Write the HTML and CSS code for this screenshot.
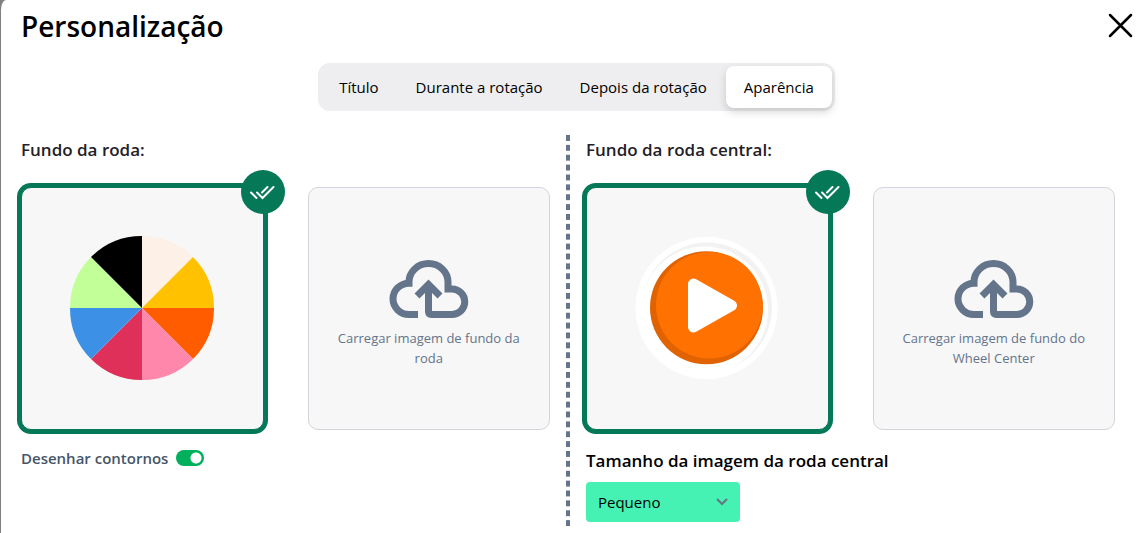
FILE: index.html
```html
<!DOCTYPE html>
<html lang="pt">
<head>
<meta charset="utf-8">
<meta name="viewport" content="width=device-width, initial-scale=1">
<title>Personalização</title>
<link rel="stylesheet" href="styles.css">
</head>
<body>
<svg class="sprite" aria-hidden="true">
  <symbol id="double-check" viewBox="0 0 26 24">
    <path d="M1 12.500l5.500 5.500M7 12.500l5.500 5.500L23.500 7M12 12.500l5.500-5.500" fill="none" stroke="currentColor" stroke-width="2" stroke-linecap="round"/>
  </symbol>
  <symbol id="cloud-upload" viewBox="0 0 80 60">
    <path d="M29 54.500H20A16 15.650 0 0 1 20 23.200V22a19.500 18.500 0 0 1 39 0v7H63a12.700 12.700 0 0 1 0 25.500H42.500Q39.500 54.500 39.500 51.500V24M28 36L39.500 24.500L51 36" fill="none" stroke="currentColor" stroke-width="7"/>
  </symbol>
</svg>
<main class="dialog">
  <header class="header">
    <h1 class="title">Personalização</h1>
    <button class="close" type="button" aria-label="Fechar">
      <svg viewBox="0 0 24 24"><path d="M2 1L23 22M23 1L2 22"/></svg>
    </button>
  </header>
  <nav class="tabs">
    <button class="tab" type="button">Título</button>
    <button class="tab" type="button">Durante a rotação</button>
    <button class="tab" type="button">Depois da rotação</button>
    <button class="tab tab-active" type="button">Aparência</button>
  </nav>
  <div class="columns">
    <section class="column">
      <h2 class="heading">Fundo da roda:</h2>
      <div class="cards">
        <button class="card card-selected" type="button" aria-label="Roda colorida">
          <svg class="art" viewBox="-72 -72 144 144">
            <path fill="#fdf1e7" d="M0 0V-72A72 72 0 0 1 51 -51Z"/>
            <path fill="#ffc100" d="M0 0L51 -51A72 72 0 0 1 72 0Z"/>
            <path fill="#ff5c00" d="M0 0H72A72 72 0 0 1 51 51Z"/>
            <path fill="#ff87ab" d="M0 0L51 51A72 72 0 0 1 0 72Z"/>
            <path fill="#de3058" d="M0 0V72A72 72 0 0 1 -51 51Z"/>
            <path fill="#3c91e6" d="M0 0L-51 51A72 72 0 0 1 -72 0Z"/>
            <path fill="#c3ff99" d="M0 0H-72A72 72 0 0 1 -51 -51Z"/>
            <path fill="#000" d="M0 0L-51 -51A72 72 0 0 1 0 -72Z"/>
          </svg>
          <span class="badge"><svg><use href="#double-check"/></svg></span>
        </button>
        <button class="card card-upload" type="button">
          <svg class="cloud"><use href="#cloud-upload"/></svg>
          <span class="caption">Carregar imagem de fundo da roda</span>
        </button>
      </div>
      <label class="toggle">Desenhar contornos <input class="switch" type="checkbox" role="switch" checked></label>
    </section>
    <div class="divider"></div>
    <section class="column">
      <h2 class="heading">Fundo da roda central:</h2>
      <div class="cards">
        <button class="card card-selected" type="button" aria-label="Botão de reprodução">
          <svg class="art" viewBox="0 0 144 144">
            <circle cx="71.500" cy="72" r="71" fill="#fff"/>
            <circle cx="72" cy="71.500" r="65" fill="#f2f2f2"/>
            <circle cx="69.500" cy="74" r="63.500" fill="#fff"/>
            <circle cx="71.500" cy="71.700" r="56.500" fill="#e06200"/>
            <circle cx="74.300" cy="69.300" r="53.300" fill="#ff7100"/>
            <path d="M58.500 49V92L96.500 70.500Z" transform="translate(0 -1)" fill="#fff" stroke="#fff" stroke-width="11" stroke-linejoin="round"/>
          </svg>
          <span class="badge"><svg><use href="#double-check"/></svg></span>
        </button>
        <button class="card card-upload" type="button">
          <svg class="cloud"><use href="#cloud-upload"/></svg>
          <span class="caption">Carregar imagem de fundo do Wheel Center</span>
        </button>
      </div>
      <label class="size-label" for="size">Tamanho da imagem da roda central</label>
      <div class="select-wrap">
        <select class="select" id="size"><option>Pequeno</option><option>Médio</option><option>Grande</option></select>
        <svg class="chevron" viewBox="0 0 12 8"><path d="M1 1L6 6L11 1"/></svg>
      </div>
    </section>
  </div>
</main>
</body>
</html>
```
FILE: styles.css
```css
* { box-sizing: border-box; }
body {
  margin: 0;
  background: #808080;
  font-family: "Open Sans", "Noto Sans", sans-serif;
  font-size: 15px;
  color: #000;
}
button, select { font: inherit; color: inherit; border: 0; padding: 0; }
button { cursor: pointer; }
h1, h2 { margin: 0; }
.sprite { position: absolute; width: 0; height: 0; }
.dialog {
  min-height: 100vh;
  margin-left: 1px;
  padding: 8px 12px 3px 20px;
  background: #fff;
  border-top-left-radius: 5px 10px;
}
.header { display: flex; justify-content: space-between; align-items: center; height: 36px; }
.title { font-size: 28px; line-height: 36px; font-weight: 600; }
.close { width: 24px; height: 24px; background: none; }
.close svg { display: block; width: 24px; height: 24px; overflow: visible; stroke: #000; stroke-width: 2.5; fill: none; stroke-linecap: round; }
.close svg { width: 24px; }
.tabs {
  display: flex;
  gap: 1px;
  width: fit-content;
  margin: 19px auto 24px;
  padding: 3px;
  border-radius: 12px;
  background: #eeeef0;
}
.tab { height: 42px; padding: 0 18px; border-radius: 8px; background: none; }
.tab-active { background: #fff; box-shadow: 0 4px 8px rgba(0, 0, 0, .16); }
.columns { display: grid; grid-template-columns: 1fr 4px 1fr; gap: 16px; align-items: start; margin-right: 17px; }
.divider {
  height: 395px;
  background: linear-gradient(#64748b 60%, transparent 60%) 0 0 / 4px 10px round;
}
.heading { font-size: 17px; line-height: 30px; font-weight: 600; color: #1f2028; margin-bottom: 22px; }
.cards { display: grid; grid-template-columns: 1fr 1fr; gap: 44px; }
.card {
  position: relative;
  display: flex;
  flex-direction: column;
  align-items: center;
  justify-content: center;
  aspect-ratio: 1;
  padding: 0 20px;
  border: 1px solid #d1d5db;
  border-radius: 10px;
  background: #f7f7f7;
  color: #64748b;
}
.card-selected { border-color: #047857; box-shadow: 0 0 0 4px #047857; }
.card-upload { padding-top: 12px; }
.art { width: 144px; height: 144px; }
.badge {
  position: absolute;
  top: -18px;
  right: -22px;
  display: flex;
  align-items: center;
  justify-content: center;
  width: 44px;
  height: 44px;
  border-radius: 50%;
  background: #047857;
  color: #fff;
}
.badge svg { width: 26px; height: 24px; }
.cloud { width: 80px; height: 60px; margin-bottom: 8px; }
.caption { font-size: 13px; line-height: 20px; }
.toggle { display: flex; align-items: center; gap: 8px; margin-top: 16px; line-height: 24px; font-weight: 600; color: #475569; }
.switch {
  appearance: none;
  width: 28px;
  height: 16px;
  margin: 0;
  border-radius: 8px;
  background: radial-gradient(circle at 20px 8px, #fff 5px, transparent 6px) #00b05c;
}
.size-label { display: block; margin-top: 16px; font-size: 17px; line-height: 30px; font-weight: 600; }
.select-wrap { position: relative; width: 154px; margin-top: 6px; }
.select { display: block; width: 100%; height: 40px; padding: 0 12px; border-radius: 4px; background: #45f2b4; appearance: none; }
.chevron { position: absolute; right: 12px; top: 16px; width: 12px; height: 8px; fill: none; stroke: #6b7280; stroke-width: 2; pointer-events: none; }
```
